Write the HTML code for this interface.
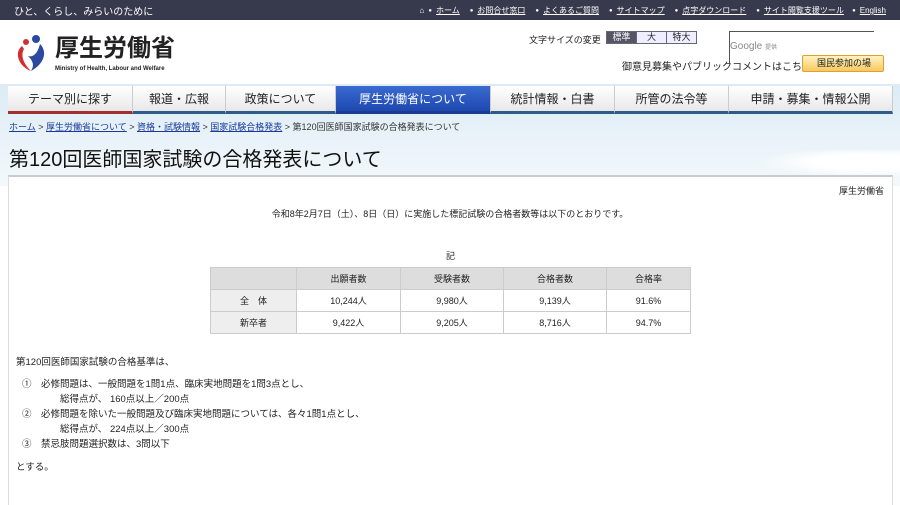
<!DOCTYPE html>
<html><head><meta charset="utf-8"><style>
*{margin:0;padding:0;box-sizing:border-box}
body{width:900px;height:498px;overflow:hidden;background:#fff;font-family:"Liberation Sans","Noto Sans CJK JP",sans-serif;color:#222;position:relative}
.abs{position:absolute}
#top{left:0;top:0;width:900px;height:20px;background:#363a4c;color:#fff;font-size:10px}
#top .l{left:14px;top:3px}
#top .r{right:14px;top:5px;font-size:8px;white-space:nowrap}
#top .r span{margin-left:10px;text-decoration:underline}
#top .r span:before{content:"●";font-size:6px;margin-right:4px;vertical-align:1px;text-decoration:none;display:inline-block}
.nav{top:86px;height:28px;background:linear-gradient(#fff,#e8e8e8);border-bottom:3px solid #2e5c8a;font-size:12px;text-align:center;line-height:27px;color:#222;border-right:1px solid #ccc}
.tbl{left:210px;top:267px;border-collapse:collapse;font-size:9px}
.tbl td{border:1px solid #ccc;height:22px;text-align:center}
.tbl tr:first-child td{background:#ddd}
.tbl td:first-child{background:#eee}
.t{font-size:10px;white-space:nowrap}
</style></head><body>
<div id="top" class="abs"><div class="abs l">ひと、くらし、みらいのために</div>
<div class="abs r">⌂ <span style="margin-left:2px">ホーム</span><span>お問合せ窓口</span><span>よくあるご質問</span><span>サイトマップ</span><span>点字ダウンロード</span><span>サイト閲覧支援ツール</span> <span style="margin-left:6px">English</span></div></div>
<svg class="abs" style="left:14px;top:34px" width="34" height="38" viewBox="0 0 34 38"><circle cx="12" cy="8" r="3" fill="#d03030"/><circle cx="22" cy="5" r="4" fill="#2a4aa0"/><path d="M8 12 C0 18 4 32 17 37 C10 30 6 22 10 15Z" fill="#d03030"/><path d="M17 37 C30 30 34 18 26 10 C24 18 20 24 14 22 C20 28 20 32 17 37Z" fill="#2a4aa0"/></svg>
<div class="abs" style="left:55px;top:35px;font-size:24px;font-weight:bold;color:#222;line-height:28px">厚生労働省</div>
<div class="abs" style="left:55px;top:66px;font-size:6px;font-weight:bold">Ministry of Health, Labour and Welfare</div>
<div class="abs t" style="left:529px;top:33px;font-size:9px">文字サイズの変更</div>
<div class="abs" style="left:606px;top:31px;width:91px;height:13px;border:1px solid #667;font-size:9px;display:flex;text-align:center;line-height:11px"><div style="flex:1;background:#556;color:#fff">標準</div><div style="flex:1;border-left:1px solid #667;background:#eef">大</div><div style="flex:1;border-left:1px solid #667;background:#eef">特大</div></div>
<div class="abs" style="left:729px;top:31px;width:145px;height:1px;background:#555"></div>
<div class="abs" style="left:729px;top:31px;width:1px;height:32px;background:#555"></div>
<div class="abs" style="left:730px;top:41px;font-size:10px;color:#888">Google <span style="font-size:6px">提供</span></div>
<div class="abs t" style="left:622px;top:58px;font-size:10px">御意見募集やパブリックコメントはこちら</div>
<div class="abs" style="left:802px;top:55px;width:82px;height:17px;background:linear-gradient(#fff3c0,#f8c860);border:1px solid #e0a030;border-radius:2px;font-size:9px;line-height:15px;padding-left:14px">国民参加の場</div>
<div class="abs" style="left:0;top:84px;width:900px;height:102px;background:linear-gradient(#dcebf5,#eaf3f9 60%,#f4f8fb)"></div>
<div class="abs nav" style="left:8px;width:125px;border-bottom-color:#a03030">テーマ別に探す</div>
<div class="abs nav" style="left:133px;width:93px">報道・広報</div>
<div class="abs nav" style="left:226px;width:110px">政策について</div>
<div class="abs nav" style="left:336px;width:155px;background:linear-gradient(#3a6ad0,#1e48b0);color:#fff;border-bottom-color:#1a3c90">厚生労働省について</div>
<div class="abs nav" style="left:491px;width:124px">統計情報・白書</div>
<div class="abs nav" style="left:615px;width:114px">所管の法令等</div>
<div class="abs nav" style="left:729px;width:164px">申請・募集・情報公開</div>
<div class="abs t" style="left:9px;top:120px;font-size:9px;color:#333"><u style="color:#1a3a9a">ホーム</u> &gt; <u style="color:#1a3a9a">厚生労働省について</u> &gt; <u style="color:#1a3a9a">資格・試験情報</u> &gt; <u style="color:#1a3a9a">国家試験合格発表</u> &gt; 第120回医師国家試験の合格発表について</div>
<div class="abs t" style="left:9px;top:143px;font-size:20px;color:#111">第120回医師国家試験の合格発表について</div>
<div class="abs" style="left:740px;top:150px;width:160px;height:30px;background:radial-gradient(ellipse at 80% 40%,#ffffff 0,#ffffff 30%,transparent 60%)"></div>
<div class="abs" style="left:8px;top:175px;width:885px;height:330px;background:#fff;border-top:2px solid #c8ccd0;border-left:1px solid #ddd;border-right:1px solid #ddd"></div>
<div class="abs t" style="right:16px;top:184px;font-size:9px">厚生労働省</div>
<div class="abs t" style="left:0;width:900px;text-align:center;top:207px;font-size:9px">令和8年2月7日（土）、8日（日）に実施した標記試験の合格者数等は以下のとおりです。</div>
<div class="abs t" style="left:446px;top:249px;font-size:9px">記</div>
<table class="abs tbl"><tr><td style="width:86px"></td><td style="width:104px">出願者数</td><td style="width:103px">受験者数</td><td style="width:103px">合格者数</td><td style="width:84px">合格率</td></tr>
<tr><td>全　体</td><td>10,244人</td><td>9,980人</td><td>9,139人</td><td>91.6%</td></tr>
<tr><td>新卒者</td><td>9,422人</td><td>9,205人</td><td>8,716人</td><td>94.7%</td></tr></table>
<div class="abs t" style="left:16px;top:355px;font-size:9.5px;line-height:15px">第120回医師国家試験の合格基準は、</div>
<div class="abs t" style="left:22px;top:377px;font-size:9.5px;line-height:15px">①　必修問題は、一般問題を1問1点、臨床実地問題を1問3点とし、<br>　　　　総得点が、 160点以上／200点<br>②　必修問題を除いた一般問題及び臨床実地問題については、各々1問1点とし、<br>　　　　総得点が、 224点以上／300点<br>③　禁忌肢問題選択数は、3問以下</div>
<div class="abs t" style="left:16px;top:459px;font-size:9.5px">とする。</div>
</body></html>
